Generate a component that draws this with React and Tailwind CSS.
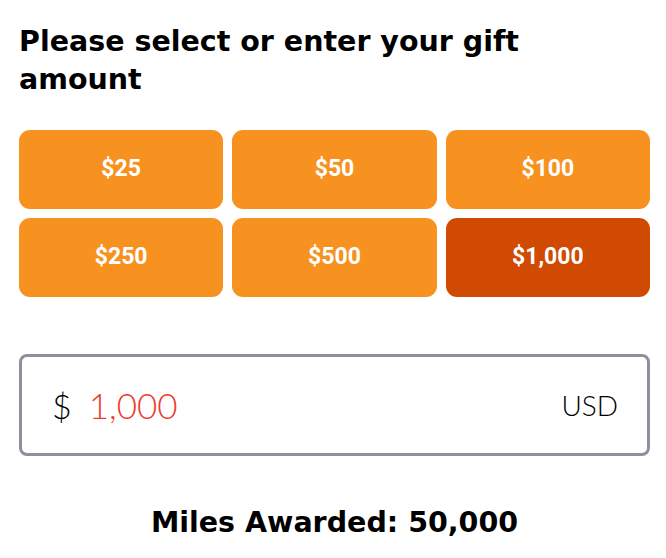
import React, { useState } from "react";

const amounts = [25, 50, 100, 250, 500, 1000];

const fmt = (n) => n.toLocaleString("en-US");

const App = () => {
  const [amount, setAmount] = useState(1000);

  return (
    <div className="w-[666px] h-[558px] bg-white pl-[19px] pr-[16px] pt-[23px] font-['DejaVu_Sans',sans-serif]">
      <h2 className="text-[28.5px] leading-[38px] font-bold text-black pr-[80px]">
        Please select or enter your gift amount
      </h2>

      <div className="mt-[31px] grid grid-cols-3 gap-x-[9px] gap-y-[9px]">
        {amounts.map((a) => (
          <button
            key={a}
            onClick={() => setAmount(a)}
            className={
              a === amount
                ? "h-[79px] rounded-[11px] bg-[#d14a01] text-white text-[23px] font-bold font-['Roboto',sans-serif]"
                : "h-[79px] rounded-[11px] bg-[#f79221] text-white text-[23px] font-bold font-['Roboto',sans-serif]"
            }
          >
            ${fmt(a)}
          </button>
        ))}
      </div>

      <div className="mt-[57px] h-[102px] rounded-[8px] border-[3px] border-[#8d919d] flex items-center pl-[30px] pr-[29px] font-['Lato',sans-serif] font-light">
        <span className="text-[34px] text-black">$</span>
        <span className="ml-[17px] text-[35px] text-[#ec3b30]">{fmt(amount)}</span>
        <span className="ml-auto text-[28px] text-black">USD</span>
      </div>

      <p className="mt-[46px] text-center text-[28.5px] font-bold text-black">
        Miles Awarded: {fmt(amount * 50)}
      </p>
    </div>
  );
};

export default App;
